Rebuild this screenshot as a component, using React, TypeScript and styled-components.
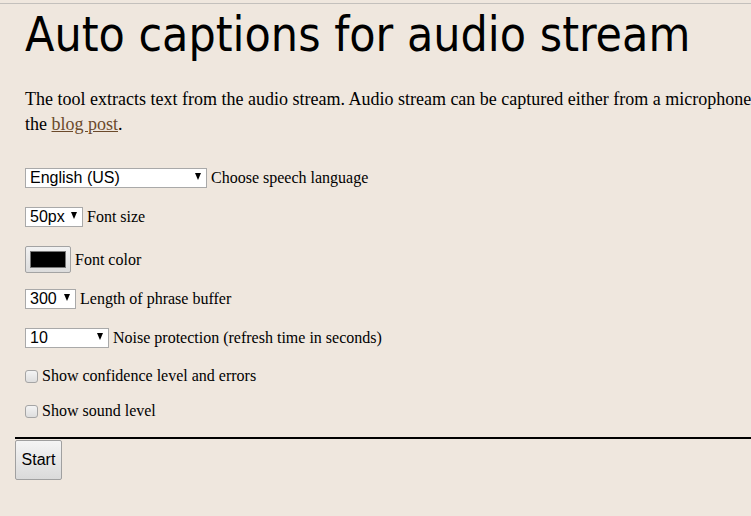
import styled, { createGlobalStyle } from "styled-components";

const GlobalStyle = createGlobalStyle`
  html, body {
    margin: 0;
    padding: 0;
    background: #efe7de;
    overflow: hidden;
  }
  body {
    font-family: "Liberation Serif", "Times New Roman", serif;
    font-size: 16px;
    color: #000;
  }
`;

const Page = styled.div`
  margin-top: 3px;
  border-top: 1px solid #c3c0bc;
  width: 1100px;
  padding-left: 15px;
`;

const Content = styled.div`
  padding: 0 10px;
`;

const Title = styled.h1`
  font-family: "DejaVu Sans Condensed", "DejaVu Sans", sans-serif;
  font-weight: normal;
  font-size: 47.8px;
  line-height: 56px;
  margin: 3px 0 24px;
`;

const Intro = styled.p`
  font-size: 18px;
  line-height: 25px;
  margin: 0 0 31px;
  white-space: nowrap;
`;

const Link = styled.a`
  color: #6b4a2b;
`;

const Row = styled.div<{ $h?: number; $mb?: number }>`
  display: flex;
  align-items: center;
  gap: 4px;
  height: ${(p) => p.$h ?? 20}px;
  margin-bottom: ${(p) => p.$mb ?? 19}px;
`;

const SelectBox = styled.span<{ $w: number }>`
  position: relative;
  display: inline-block;
  width: ${(p) => p.$w}px;
  height: 20px;
`;

const Select = styled.select`
  appearance: none;
  width: 100%;
  height: 100%;
  font-family: "Liberation Sans", Arial, sans-serif;
  font-size: 16px;
  line-height: 18px;
  color: #000;
  background: #fff;
  border: 1px solid #a9a9a9;
  padding: 0 16px 0 4px;
  border-radius: 0;
  outline: none;
`;

const Arrow = styled.span`
  position: absolute;
  right: 6px;
  top: 5px;
  width: 0;
  height: 0;
  border-left: 3.5px solid transparent;
  border-right: 3.5px solid transparent;
  border-top: 7px solid #000;
  pointer-events: none;
`;

const ColorButton = styled.button`
  width: 46px;
  height: 27px;
  padding: 4px;
  border: 1px solid #a3a3a3;
  border-radius: 2px;
  background: linear-gradient(#f2f2f2, #dcdcdc);
  display: flex;
`;

const Swatch = styled.span`
  flex: 1;
  background: #000;
  border: 1px solid #777;
`;

const CheckRow = styled.label`
  display: flex;
  align-items: center;
  gap: 3px;
  height: 18px;
  margin-bottom: 17px;
  font-size: 16px;
`;

const Check = styled.input`
  appearance: none;
  width: 13px;
  height: 13px;
  margin: 0 1px 0 0;
  border: 1px solid #a5a5a5;
  border-radius: 3px;
  background: linear-gradient(#f4f4f4, #dedede);
`;

const Label = styled.span`
  font-size: 16px;
`;

const Rule = styled.hr`
  border: 0;
  border-top: 2px solid #000;
  margin: 2px 0 0;
`;

const StartButton = styled.button`
  font-family: "Liberation Sans", Arial, sans-serif;
  font-size: 16px;
  width: 47px;
  height: 40px;
  margin-top: 1px;
  padding: 0;
  border: 1px solid #a0a0a0;
  border-radius: 2px;
  background: linear-gradient(#f5f5f5, #dadada);
  color: #000;
`;

function Dropdown({ width, value }: { width: number; value: string }) {
  return (
    <SelectBox $w={width}>
      <Select defaultValue={value}>
        <option value={value}>{value}</option>
      </Select>
      <Arrow />
    </SelectBox>
  );
}

export default function App() {
  return (
    <>
      <GlobalStyle />
      <Page>
        <Content>
          <Title>Auto captions for audio stream</Title>
          <Intro>
            The tool extracts text from the audio stream. Audio stream can be
            captured either from a microphone or from the system sound output.
            Read more in
            <br />
            the <Link href="#">blog post</Link>.
          </Intro>
          <Row>
            <Dropdown width={182} value="English (US)" />
            <Label>Choose speech language</Label>
          </Row>
          <Row>
            <Dropdown width={58} value="50px" />
            <Label>Font size</Label>
          </Row>
          <Row $h={27} $mb={16}>
            <ColorButton>
              <Swatch />
            </ColorButton>
            <Label>Font color</Label>
          </Row>
          <Row>
            <Dropdown width={51} value="300" />
            <Label>Length of phrase buffer</Label>
          </Row>
          <Row $mb={19}>
            <Dropdown width={84} value="10" />
            <Label>Noise protection (refresh time in seconds)</Label>
          </Row>
          <CheckRow>
            <Check type="checkbox" />
            Show confidence level and errors
          </CheckRow>
          <CheckRow>
            <Check type="checkbox" />
            Show sound level
          </CheckRow>
        </Content>
        <Rule />
        <StartButton>Start</StartButton>
      </Page>
    </>
  );
}
